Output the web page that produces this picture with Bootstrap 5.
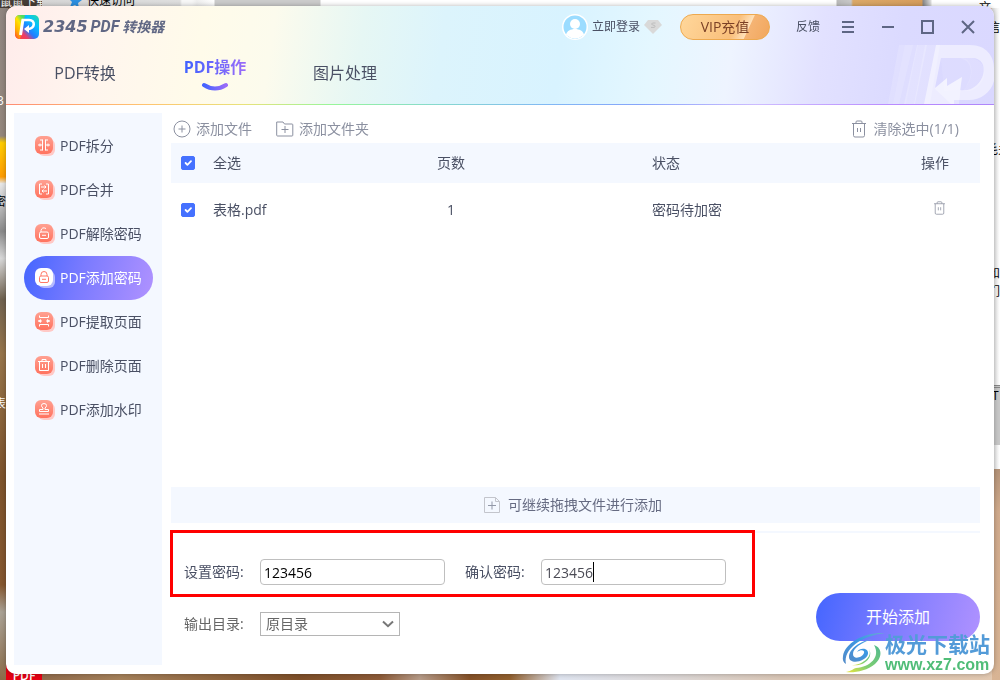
<!DOCTYPE html>
<html lang="zh-CN">
<head>
<meta charset="utf-8">
<meta name="viewport" content="width=device-width, initial-scale=1">
<title>2345PDF转换器</title>
<link href="https://cdn.jsdelivr.net/npm/bootstrap@5.3.0/dist/css/bootstrap.min.css" rel="stylesheet">
<style>
  :root { --ink:#4a5064; --muted:#8b90a0; --pale:#f4f8ff; --accent:#4571ff; }
  body { font-family:"Open Sans","Noto Sans CJK SC",sans-serif; font-size:14px; line-height:20px; color:var(--ink); background:#8a6238; overflow:hidden; }

  /* desktop seen around the window */
  .desk { inset:0; overflow:hidden; color:#000; background:linear-gradient(90deg,#876044 0,#a4805a 12%,#7e4f29 30%,#8d5b38 38%,#b69b88 42%,#855127 47%,#91602f 51%,#dfe4ef 56%,#dcd6d4 68%,#d9c6b6 78%,#e2c8b0 100%); }
  .desk > * { position:absolute; white-space:nowrap; }
  .desk-left { left:0; top:0; bottom:0; width:8px; background:linear-gradient(#8f8580 0,#94877c 20%,#ffcd00 21%,#ff9c00 26%,#e8e8e8 27%,#8a8a8a 34%,#d8d8d8 38%,#70624f 44%,#96744a 52%,#7d532c 70%,#85572f 86%,#aaa295 90%,#8b6b48 100%); }
  .desk-top { left:42px; right:0; top:0; height:8px; background:linear-gradient(90deg,#d6d6d6 0,#dedede 138px,#f7f7f7 140px,#f7f7f7 150px,#eee 155px,#fff 172px,#cbcbcb 173px,#cbcbcb 278px,#fff 279px,#fff 794px,#bbb 795px,#c8c8c8 809px,#dba968 811px,#d69d5c 880px,#888 881px,#ddd 889px,#fff 890px); }
  .desk-name { left:0; top:0; width:42px; height:8px; background:#463c36; color:#fff; overflow:hidden; line-height:4px; font-size:12px; }
  .desk-doc { right:0; top:0; width:8px; height:469px; background:linear-gradient(90deg,#ddd,#fff); }
  .desk-gray { right:0; top:385px; width:6px; height:60px; background:#c7c7c7; border-top:3px double #888; }
  .desk-wood { right:0; top:469px; bottom:0; width:8px; background:linear-gradient(#b49378,#d0aa8c 20%,#d8b494); }
  .desk-pdf { left:6px; top:664px; width:36px; height:20px; background:#e60012; color:#fff; text-align:center; font-size:12px; font-weight:600; line-height:24px; }

  .shell { min-height:100vh; padding:6px; }
  .app-window { background:#fff; border-radius:10px; overflow:hidden; box-shadow:0 0 5px rgba(0,0,0,.3); }

  .app-head { height:99px; background:linear-gradient(98deg,#ffeceb 0,#fff5ee 9%,#fffbea 20%,#fcfbed 27%,#e6f7f4 36%,#dcf4fc 44%,#d8f3ff 56%,#e4f7ff 65%,#eef4ff 73%,#e2e1ff 82%,#dbdaff 90%,#dad8ff 100%); }
  .head-rule { height:1px; background:linear-gradient(90deg,#ff8d73,#ffc470 14%,#e9e27a 24%,#98f69a 33%,#86d8d0 44%,#82b8f4 55%,#86a5fa 64%,#cdbcff 76%,#b98aff 90%,#ae86fa); }
  .title-row { height:42px; padding:0 16px 0 9px; }
  .brand-text { color:#606784; font-style:italic; font-weight:700; font-size:16px; line-height:20px; gap:3px; margin-left:4px; }
  .brand-num { font-family:"DejaVu Sans",sans-serif; font-size:16px; }
  .brand-pdf { font-family:Roboto,sans-serif; font-size:16px; }
  .brand-cn { font-size:14px; }
  .plain-btn { border:0; background:none; padding:0; color:inherit; line-height:20px; }
  .head-link { font-size:12px; color:var(--ink); text-decoration:none; }
  .vip-btn { width:90px; height:26px; border:1px solid #eda94f; border-radius:13px; padding:0; font-size:14px; line-height:22px; color:#7b4126; background:linear-gradient(115deg,#ffd79b 0,#f9bf7b 60%,#ffe1b9 74%,#f5b474 75%,#f2a65c 100%); }
  .win-btn { width:20px; height:20px; }
  .head-mark { right:0; bottom:1px; }
  .tab-row { padding-left:14px; }
  .tab-item { width:130px; height:44px; padding-top:14px; text-align:center; font-size:16px; line-height:22px; color:var(--ink); text-decoration:none; }
  .tab-item.active { font-weight:700; padding-top:8px; }
  .tab-item.active span { background:linear-gradient(90deg,#3f62ff,#9a6cf8); -webkit-background-clip:text; background-clip:text; color:transparent; }
  .tab-item svg { display:block; margin:4px auto 0; }

  .side { width:148px; background:var(--pale); padding:11px 9px 11px 10px; }
  .side a { height:44px; border-radius:22px; padding-left:11px; gap:4px; color:var(--ink); text-decoration:none; }
  .side a.active { color:#fff; background:linear-gradient(105deg,#4a68ff 5%,#7b7bff 45%,#b092ff 100%); }
  .main { padding:0 6px 0 9px; }
  .body-row { padding:8px 8px 9px; }

  .tools { height:30px; padding:2px 21px 0 2px; color:var(--muted); }
  .tools button { gap:5px; }
  .tools .clear-btn { gap:7px; }
  .files { table-layout:fixed; color:var(--ink); }
  .files > :not(caption) > * > * { padding:0; border:0; vertical-align:middle; font-weight:400; background:transparent; color:inherit; box-shadow:none; }
  .files thead tr { height:40px; background:var(--pale); }
  .files tbody tr { height:54px; }
  .files .form-check-input { display:block; margin:0 0 0 10px; width:14px; height:14px; border-radius:2px; border-color:var(--accent); background-color:var(--accent); }
  .c-tick { width:42px; } .c-pages { width:160px; } .c-state { width:236px; } .c-gap { width:123px; } .c-act { width:90px; }
  .state-cell { padding-left:121px !important; }
  .drop-zone { height:36px; background:var(--pale); gap:8px; padding-right:5px; color:#666b82; }
  .split { height:2px; background:var(--pale); margin-top:8px; }

  .options { padding:26px 0 24px 13px; }
  .option-rows { padding-bottom:5px; }
  .mark-frame { left:-1px; top:-3px; width:585px; height:67px; border:3px solid #f00; pointer-events:none; max-width:100%; }
  .field-label { width:76px; }
  .pw { width:185px; height:26px; border:1px solid #bfbfbf; border-radius:4px; padding:2px 3px; font-size:14px; line-height:20px; color:#000; background:#fff; }
  .pw-second { color:#4b4b55; }
  .caret { left:52px; top:3px; width:1px; height:20px; background:#000; }
  .dir { appearance:none; width:140px; height:24px; border:1px solid #b5b5b5; border-radius:0; padding:0 5px; font-size:14px; line-height:20px; color:#666; background:#fff url("data:image/svg+xml,%3Csvg xmlns='http://www.w3.org/2000/svg' width='12' height='8'%3E%3Cpath d='M1 1.5l5 4.700 5-4.700' fill='none' stroke='%23777' stroke-width='2'/%3E%3C/svg%3E") no-repeat right 5px center; }
  .go { width:164px; height:48px; border:0; border-radius:24px; font-size:16px; color:#fff; background:linear-gradient(105deg,#4a68ff 5%,#7b7bff 45%,#b092ff 100%); }
  .site-mark { right:10px; bottom:6px; gap:0; pointer-events:none; }
  .site-cn { font-size:21px; line-height:24px; font-weight:700; color:#539bd8; }
  .site-url { font-family:"Liberation Sans",sans-serif; font-size:16px; line-height:18px; font-weight:700; color:#50bd78; }
</style>
</head>
<body>
<svg width="0" height="0" class="position-absolute" aria-hidden="true">
  <defs>
    <linearGradient id="coral" x1="0" y1="0" x2="0" y2="1"><stop offset="0" stop-color="#ffa192"/><stop offset="1" stop-color="#ff735f"/></linearGradient>
    <symbol id="tile" viewBox="0 0 20 20"><rect x="3" y="3" width="17" height="17" rx="6" fill="#ffc9c6"/><rect width="18" height="18" rx="6" fill="url(#coral)"/></symbol>
    <symbol id="trash" viewBox="0 0 16 18"><path d="M1 3.500h14M5 3.500V2q0-1 1-1h4q1 0 1 1v1.500M2.500 3.500v12q0 1.500 1.500 1.500h8q1.500 0 1.500-1.500v-12M6.500 8v4M9.500 8v4" fill="none" stroke="currentColor"/></symbol>
  </defs>
</svg>

<div class="desk position-fixed" aria-hidden="true">
  <div class="desk-left"></div>
  <div class="desk-doc"></div>
  <div class="desk-top"></div>
  <div class="desk-name">鼠鼠下载</div>
  <svg style="left:68px;top:-6px" width="14" height="14" viewBox="0 0 14 14"><path d="M7 0l2 5 5 1-4 3 1 5-4-3-5 2 2-5-4-4 5 0z" fill="#2b8fe0"/></svg>
  <span style="left:87px;top:-9px;font-size:12px">快速访问</span>
  <span style="left:-3px;top:91px;font-size:12px;color:#fff">3</span>
  <span style="left:-6px;top:394px;font-size:12px;color:#fff">表</span>
  <span style="left:-6px;top:192px;font-size:12px">密</span>
  <span style="left:972px;top:-2px;font-size:12px">- 文</span>
  <span style="left:988px;top:18px;font-size:12px">信,</span>
  <span style="left:986px;top:140px;font-size:12px">毛关</span>
  <span style="left:988px;top:265px;font-size:12px;line-height:18px">和<br>们</span>
  <div class="desk-gray"></div>
  <span style="left:992px;top:386px;font-size:12px">T</span>
  <div class="desk-wood"></div>
  <div class="desk-pdf">PDF</div>
</div>

<div class="shell d-flex position-relative">
  <div class="app-window flex-grow-1 d-flex flex-column position-relative">

    <header class="app-head position-relative">
      <svg class="head-mark position-absolute" width="106" height="59" viewBox="0 0 106 59" fill="#fff" aria-hidden="true">
        <path d="M11 0h14L11 59H0z" opacity=".15"/><path d="M17 0h13L18 59H5z" opacity=".12"/><path d="M29 0h10L27 59H16z" opacity=".22"/><path d="M37 0h15L42 59H26z" opacity=".2"/>
        <path d="M53 13h20c14 0 14 24 1 32l-18 1z" opacity=".1"/><path d="M72 13c16 4 12 24 2 33h8c18-6 20-29 2-33z" opacity=".15"/>
        <path fill-rule="evenodd" d="M48 0h34c17 0 24 12 24 23v13c-3 12-14 19-25 19H66v4H36zM53 13L47 43l12-10v8l15-9-2 13c24 4 33-32 12-32z" opacity=".5"/>
        <path d="M47 43l12-10v8l15-9-3 27h-8L47 44z" opacity=".3"/>
      </svg>
      <div class="title-row d-flex align-items-center position-relative">
        <svg width="24" height="24" viewBox="0 0 24 24" role="img" aria-label="2345PDF">
          <defs><linearGradient id="lg1" x1="0" y1="1" x2="1" y2="0"><stop offset="0" stop-color="#ff4338"/><stop offset=".28" stop-color="#ee3b66"/><stop offset=".45" stop-color="#247bff"/><stop offset=".72" stop-color="#05c0ff"/><stop offset="1" stop-color="#24dba1"/></linearGradient><linearGradient id="lg2" x1="0" y1="1" x2=".6" y2="0"><stop offset="0" stop-color="#ff3c34"/><stop offset=".35" stop-color="#ffae00"/><stop offset=".7" stop-color="#ffe400"/><stop offset="1" stop-color="#4fdc62"/></linearGradient></defs>
          <rect width="24" height="24" rx="5" fill="url(#lg1)"/><path d="M5 0h5L5 24q-5 0-5-5V5q0-5 5-5z" fill="url(#lg2)"/><path d="M8 4L5.500 20" stroke="#fff" stroke-width="3"/><path d="M7 5h7c7 0 6 9-1 9h-1" fill="none" stroke="#fff" stroke-width="2.600"/><path d="M14 10l-5 4 5 4z" fill="#fff"/>
        </svg>
        <div class="brand-text d-flex align-items-center"><span class="brand-num">2345</span><span class="brand-pdf">PDF</span><span class="brand-cn">转换器</span></div>
        <a href="#" class="head-link d-flex align-items-center ms-auto">
          <svg class="me-1" width="26" height="26" viewBox="0 0 26 26" aria-hidden="true"><circle cx="13" cy="13" r="13" fill="#fff"/><circle cx="13" cy="13" r="11.500" fill="#9bdcff"/><circle cx="13" cy="10" r="5" fill="#fff"/><path d="M4 21c1-8 17-8 18 0q-9 7-18 0z" fill="#fff"/></svg>
          立即登录
          <svg class="ms-1" width="18" height="14" viewBox="0 0 18 14" aria-hidden="true"><path d="M4 0h10l4 5-9 9-9-9z" fill="#d9d9d9"/><path d="M11.500 3H8.500q-2 1 0 2l2 .4q1.500 1.600-.5 2H7" stroke="#bdbdbd" fill="none"/></svg>
        </a>
        <button type="button" class="vip-btn" style="margin-left:18px">VIP充值</button>
        <a href="#" class="head-link" style="margin:0 18px 0 26px">反馈</a>
        <div class="d-flex" style="gap:20px;color:#5e6684">
          <button type="button" class="plain-btn win-btn" aria-label="菜单"><svg class="d-block" width="20" height="20"><path d="M4 5h12M4 10h12M4 15h12" stroke="currentColor" stroke-width="2"/></svg></button>
          <button type="button" class="plain-btn win-btn" aria-label="最小化"><svg class="d-block" width="20" height="20"><path d="M4 10h12" stroke="currentColor" stroke-width="2"/></svg></button>
          <button type="button" class="plain-btn win-btn" aria-label="最大化"><svg class="d-block" width="20" height="20"><rect x="4" y="4" width="11" height="12" fill="none" stroke="currentColor" stroke-width="2"/></svg></button>
          <button type="button" class="plain-btn win-btn" aria-label="关闭"><svg class="d-block" width="20" height="20"><path d="M4 4l12 12M16 4L4 16" stroke="currentColor" stroke-width="2"/></svg></button>
        </div>
      </div>
      <nav class="tab-row d-flex position-relative">
        <a href="#" class="tab-item">PDF转换</a>
        <a href="#" class="tab-item active" aria-current="page"><span>PDF操作</span>
          <svg width="28" height="10" viewBox="0 0 28 10" aria-hidden="true"><defs><linearGradient id="sm"><stop offset="0" stop-color="#4464ff"/><stop offset="1" stop-color="#9a6cf8"/></linearGradient></defs><path d="M3 3q11 7 22 0" fill="none" stroke="url(#sm)" stroke-width="4" stroke-linecap="round"/></svg></a>
        <a href="#" class="tab-item">图片处理</a>
      </nav>
      <div class="head-rule position-absolute bottom-0 start-0 end-0"></div>
    </header>

    <div class="body-row d-flex flex-grow-1">
      <nav class="side d-flex flex-column flex-shrink-0">
        <a href="#" class="d-flex align-items-center"><svg width="21" height="20"><use href="#tile" width="20" height="20"/><path d="M7.500 3.500v11M5 4h2.500M5 14h2.500M3 9h4M10.500 3.500v11M10.500 4H13M10.500 14H13M11 9h4M5 7.500v3M13 7.500v3" stroke="#fff" fill="none"/></svg>PDF拆分</a>
        <a href="#" class="d-flex align-items-center"><svg width="21" height="20"><use href="#tile" width="20" height="20"/><path d="M7 4H4.500v10H7M11 4h2.500v10H11M6 7h5M9.500 5.500L11 7 9.500 8.500M12 11H7M8.500 9.500L7 11l1.500 1.500" stroke="#fff" fill="none"/></svg>PDF合并</a>
        <a href="#" class="d-flex align-items-center"><svg width="21" height="20"><use href="#tile" width="20" height="20"/><rect x="4.500" y="8" width="9" height="6.500" rx="1.500" stroke="#fff" fill="none"/><path d="M6 8V6.500q1-4 5-2M7 11.300h4" stroke="#fff" fill="none"/></svg>PDF解除密码</a>
        <a href="#" class="active d-flex align-items-center" aria-current="page"><svg width="21" height="20"><rect x="3" y="3" width="17" height="17" rx="6" fill="#b5baff"/><rect width="18" height="18" rx="6" fill="#fff"/><rect x="4.500" y="8" width="9" height="6.500" rx="1.500" stroke="#ff7867" fill="none"/><path d="M6 8V6.500q0-3 3-3t3 3V8M7 11.300h4" stroke="#ff7867" fill="none"/></svg>PDF添加密码</a>
        <a href="#" class="d-flex align-items-center"><svg width="21" height="20"><use href="#tile" width="20" height="20"/><path d="M4.500 3.500v2h9v-2M4.500 14.500v-2h9v2M3 9h4M11 9h4" stroke="#fff" fill="none"/><path d="M6 7L3 9l3 2zM12 7l3 2-3 2z" fill="#fff"/></svg>PDF提取页面</a>
        <a href="#" class="d-flex align-items-center"><svg width="21" height="20"><use href="#tile" width="20" height="20"/><path d="M3 5.500h12M7 5V3.500h4V5M4.500 5.500v9h9v-9M7.500 8v4M10.500 8v4" stroke="#fff" fill="none"/></svg>PDF删除页面</a>
        <a href="#" class="d-flex align-items-center"><svg width="21" height="20"><use href="#tile" width="20" height="20"/><path d="M4.500 11.500v-2H8V8q-1.500-1-1.500-2.500 0-2 2.500-2t2.500 2Q11.500 7 10 8v1.500h3.500v2zM4 14h10" stroke="#fff" fill="none"/></svg>PDF添加水印</a>
      </nav>

      <main class="main flex-grow-1 d-flex flex-column">
        <div class="tools d-flex align-items-center">
          <button type="button" class="plain-btn d-flex align-items-center"><svg width="18" height="18" fill="none" stroke="currentColor"><circle cx="9" cy="9" r="8"/><path d="M5.500 9h7M9 5.500v7"/></svg>添加文件</button>
          <button type="button" class="plain-btn d-flex align-items-center ms-4"><svg width="18" height="18" fill="none" stroke="currentColor"><path d="M1 2h6l1.500 2H16q.8 0 .8.800v10.400q0 .8-.8.800H1.500q-.8 0-.8-.8V2zM5.500 9.500h7M9 6v7"/></svg>添加文件夹</button>
          <button type="button" class="plain-btn clear-btn d-flex align-items-center ms-auto"><svg width="16" height="18"><use href="#trash"/></svg>清除选中(1/1)</button>
        </div>
        <div class="flex-grow-1">
          <table class="table files mb-0">
            <colgroup><col class="c-tick"><col><col class="c-pages"><col class="c-state"><col class="c-gap"><col class="c-act"></colgroup>
            <thead><tr>
              <th><input class="form-check-input" type="checkbox" id="all" checked aria-label="全选"></th>
              <th><label for="all">全选</label></th><th class="text-center">页数</th><th class="state-cell">状态</th><th></th><th class="text-center">操作</th>
            </tr></thead>
            <tbody><tr>
              <td><input class="form-check-input" type="checkbox" id="f1" checked aria-label="表格.pdf"></td>
              <td><label for="f1">表格.pdf</label></td><td class="text-center">1</td><td class="state-cell">密码待加密</td><td></td>
              <td class="text-center"><button type="button" class="plain-btn ms-2" style="color:var(--muted)" aria-label="删除"><svg class="d-block" width="13" height="14" viewBox="0 0 16 18"><use href="#trash"/></svg></button></td>
            </tr></tbody>
          </table>
        </div>
        <div class="drop-zone d-flex align-items-center justify-content-center">
          <svg width="16" height="16" fill="none" stroke="#c3c5cc"><path d="M.500.500h11l4 4v11H.500zM11.500.500v4h4"/><path d="M4 8.500h8M8 4.500v8" stroke="#9298a8"/></svg>可继续拖拽文件进行添加
        </div>
        <div class="split"></div>
        <form class="options position-relative d-flex">
          <div class="mark-frame position-absolute"></div>
          <div class="option-rows flex-grow-1">
            <div class="d-flex align-items-center">
              <label class="field-label" for="pw1">设置密码:</label><input class="pw" id="pw1" type="text" value="123456">
              <label class="field-label" for="pw2" style="margin-left:20px">确认密码:</label>
              <div class="position-relative"><input class="pw pw-second d-block" id="pw2" type="text" value="123456"><span class="caret position-absolute"></span></div>
            </div>
            <div class="d-flex align-items-center" style="margin-top:27px">
              <label class="field-label" for="dir" style="color:#666">输出目录:</label>
              <select class="dir" id="dir"><option>原目录</option></select>
            </div>
          </div>
          <button type="button" class="go align-self-end">开始添加</button>
        </form>
      </main>
    </div>
  </div>

  <div class="site-mark position-absolute d-flex align-items-center">
    <svg width="44" height="42" viewBox="0 0 44 42" aria-hidden="true">
      <defs><linearGradient id="sw1" x1="0" y1="1" x2="1" y2="0"><stop offset="0" stop-color="#548bc8"/><stop offset=".6" stop-color="#3b99e4"/><stop offset="1" stop-color="#6cacd0"/></linearGradient><linearGradient id="sw2" x1="0" y1="1" x2="1" y2="0"><stop offset="0" stop-color="#eee53c"/><stop offset=".4" stop-color="#80cf70"/><stop offset="1" stop-color="#50b990"/></linearGradient></defs>
      <path d="M44 1C23 0 4 11 2 24q-1 6 3 8C2 17 20 4 44 1z" fill="url(#sw1)"/><path d="M31 7C19 9 8 17 8 25c0 8 17 5 19-3 1-6-8-7-11-2 4-3 8-2 7 1-2 5-11 7-11 1 0-6 8-11 19-15z" fill="url(#sw1)"/>
      <path d="M33 13c9 3 8 13 1 19-8 7-21 9-29 8 6-1 8-4 10-4 14-1 25-11 18-23z" fill="url(#sw2)"/><path d="M28 17c4 8-7 16-17 16 11 2 22-7 17-16z" fill="url(#sw2)"/>
    </svg>
    <div><div class="site-cn">极光下载站</div><div class="site-url">www.xz7.com</div></div>
  </div>
</div>
<script src="https://cdn.jsdelivr.net/npm/bootstrap@5.3.0/dist/js/bootstrap.bundle.min.js"></script>
</body>
</html>
